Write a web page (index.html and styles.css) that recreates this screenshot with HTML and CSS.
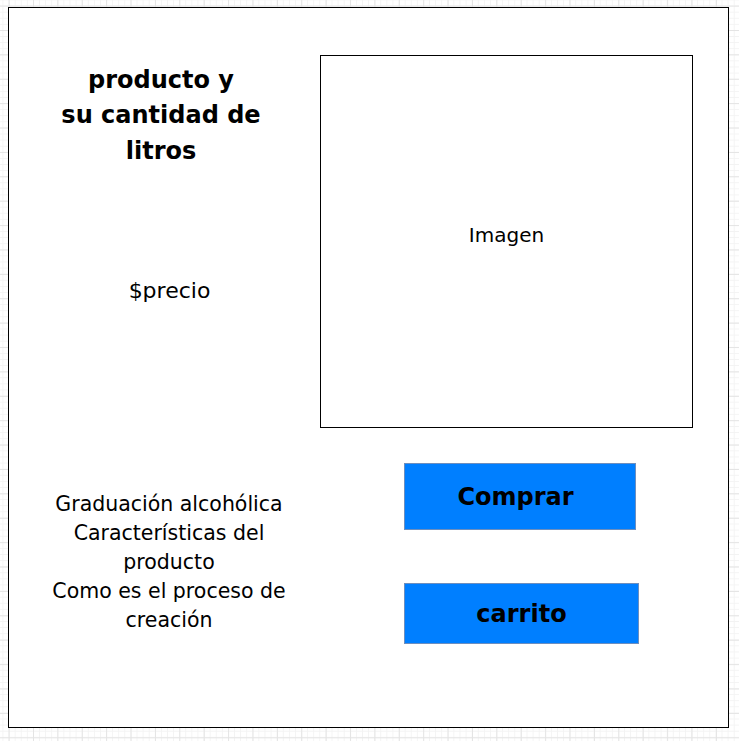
FILE: index.html
```html
<!DOCTYPE html>
<html lang="es">
<head>
<meta charset="utf-8">
<title>Producto</title>
<link rel="stylesheet" href="styles.css">
</head>
<body>
<div class="frame">
  <div class="top">
    <div class="info">
      <h1 class="title">producto y<br>su cantidad de<br>litros</h1>
      <p class="price">$precio</p>
    </div>
    <div class="image"><span>Imagen</span></div>
  </div>
  <div class="bottom">
    <p class="details">Graduación alcohólica<br>Características del<br>producto<br>Como es el proceso de<br>creación</p>
    <div class="actions">
      <button class="btn buy">Comprar</button>
      <button class="btn cart">carrito</button>
    </div>
  </div>
</div>
</body>
</html>
```
FILE: styles.css
```css
html, body {
  margin: 0;
  height: 741px;
  overflow: hidden;
}
body {
  padding: 7px 8px;
  box-sizing: border-box;
  font-family: "DejaVu Sans", "Liberation Sans", Arial, sans-serif;
  color: #000;
  background-color: #fff;
  background-image:
    linear-gradient(to right, #e4e4e4 1px, transparent 1px),
    linear-gradient(to bottom, #e4e4e4 1px, transparent 1px),
    linear-gradient(to right, #f3f3f3 1px, transparent 1px),
    linear-gradient(to bottom, #f3f3f3 1px, transparent 1px);
  background-size: 24.4px 24.4px, 24.4px 24.4px, 6.1px 6.1px, 6.1px 6.1px;
  background-position: 8.6px 5.6px, 8.6px 5.6px, 8.6px 5.6px, 8.6px 5.6px;
}
.frame {
  width: 721px;
  height: 721px;
  box-sizing: border-box;
  border: 1px solid #000;
  background: #fff;
  padding-top: 47px;
}
.top {
  display: flex;
}
.info {
  width: 311px;
  text-align: center;
}
.title {
  margin: 7.5px 7px 0 0;
  font-size: 24px;
  font-weight: bold;
  line-height: 35.5px;
}
.price {
  margin: 106.5px 0 0 10px;
  font-size: 22px;
  line-height: 29px;
}
.image {
  width: 373px;
  height: 373px;
  box-sizing: border-box;
  border: 1px solid #000;
  display: flex;
  align-items: center;
  justify-content: center;
  padding-bottom: 13px;
  font-size: 20px;
  line-height: 24px;
}
.bottom {
  display: flex;
  margin-top: 35px;
}
.details {
  width: 311px;
  box-sizing: border-box;
  padding-left: 9px;
  margin: 26.5px 0 0;
  text-align: center;
  font-size: 20.5px;
  line-height: 29px;
}
.actions {
  display: flex;
  flex-direction: column;
  align-items: flex-start;
  margin-left: 84px;
}
.btn {
  background: #007fff;
  border: 1px solid #6c8ebf;
  color: #000;
  font-family: "DejaVu Sans", "Liberation Sans", Arial, sans-serif;
  font-size: 24px;
  font-weight: bold;
  padding: 0;
  margin: 0;
  box-sizing: border-box;
}
.buy {
  width: 232px;
  height: 67px;
  padding-right: 9px;
}
.cart {
  width: 235px;
  height: 61px;
  margin-top: 53px;
}
```
